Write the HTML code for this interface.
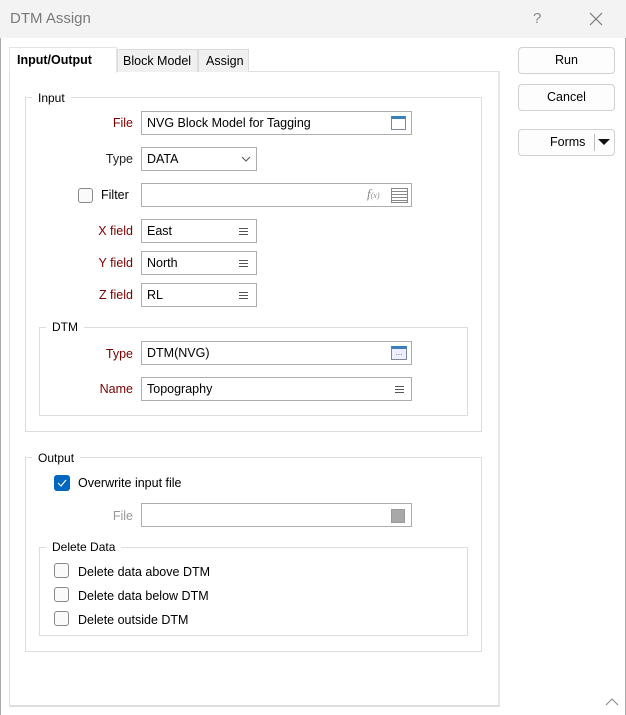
<!DOCTYPE html>
<html><head><meta charset="utf-8"><style>
*{box-sizing:border-box;margin:0;padding:0}
body{width:626px;height:715px;background:#fff;font-family:"Liberation Sans",sans-serif;font-size:12px;color:#000;position:relative;overflow:hidden}
.a{position:absolute}
.lbl{position:absolute;text-align:right;width:120px;color:#7a0000;line-height:16px;font-size:12.5px}
.box{position:absolute;border:1px solid #adadad;background:#fff;height:24px;padding:0 5px;line-height:23px;font-size:12.5px}
.grp{position:absolute;border:1px solid #dcdcdc}
.gt{position:absolute;background:#fff;padding:0 6px;line-height:14px;font-size:12px}
.btn{position:absolute;border:1px solid #d0d0d0;border-radius:4px;background:#fdfdfd;text-align:center;line-height:25px;font-size:12.5px}
.cb{position:absolute;width:15px;height:15px;border:1px solid #888;border-radius:3px;background:#fafafa}
.menu{position:absolute;width:9px;height:7px;border-top:1px solid #555;border-bottom:1px solid #555}
.menu:after{content:"";position:absolute;left:0;right:0;top:2px;height:1px;background:#555;box-shadow:0 -1px 0 #fff}
</style></head><body>
<div class="a" style="left:0;top:0;width:626px;height:38px;background:#f3f3f3"></div>
<div class="a" style="left:10px;top:10px;font-size:15px;color:#7a7a7a">DTM Assign</div>
<div class="a" style="left:533px;top:10px;font-size:15px;color:#888">?</div>
<svg class="a" style="left:589px;top:12px" width="14" height="14"><path d="M1 1L13 13M13 1L1 13" stroke="#777" stroke-width="1.2"/></svg>
<div class="a" style="left:0;top:38px;width:1px;height:677px;background:#aaa"></div>
<div class="a" style="left:625px;top:38px;width:1px;height:677px;background:#aaa"></div>

<div class="a" style="left:9px;top:71px;width:491px;height:636px;border:1px solid #e0e0e0;border-bottom:2px solid #ddd;border-right:2px solid #e8e8e8"></div>
<div class="a" style="left:9px;top:47px;width:108px;height:26px;background:#fff;border:1px solid #e4e4e4;border-bottom:none;font-weight:bold;font-size:12.5px;padding:5px 0 0 7px">Input/Output</div>
<div class="a" style="left:117px;top:49px;width:81px;height:23px;background:#f0f0f0;border:1px solid #dcdcdc;border-bottom:none;font-size:12.5px;padding:4px 0 0 5px">Block Model</div>
<div class="a" style="left:198px;top:49px;width:51px;height:23px;background:#f0f0f0;border:1px solid #dcdcdc;border-bottom:none;font-size:12.5px;padding:4px 0 0 7px">Assign</div>

<div class="grp" style="left:25px;top:97px;width:457px;height:335px"></div>
<div class="gt" style="left:32px;top:91px">Input</div>
<div class="lbl" style="left:13px;top:115px">File</div>
<div class="box" style="left:141px;top:111px;width:271px">NVG Block Model for Tagging</div>
<div class="a" style="left:391px;top:116px;width:15px;height:14px;border:1px solid #7a8a9a;border-top:3px solid #3a7fc0;background:#fff"></div>
<div class="lbl" style="left:13px;top:151px;color:#222">Type</div>
<div class="box" style="left:141px;top:147px;width:116px">DATA</div>
<svg class="a" style="left:241px;top:156px" width="10" height="6"><path d="M1 1L5 5L9 1" stroke="#555" fill="none"/></svg>
<div class="cb" style="left:78px;top:188px"></div>
<div class="a" style="left:101px;top:188px;font-size:12.5px">Filter</div>
<div class="box" style="left:141px;top:183px;width:271px"></div>
<div class="a" style="left:367px;top:186px;font-family:'Liberation Serif',serif;font-style:italic;color:#888;font-size:13px">f<span style="font-size:8px">(x)</span></div>
<div class="a" style="left:391px;top:188px;width:17px;height:15px;border:1px solid #888;background:repeating-linear-gradient(#fff 0 2px,#888 2px 3px)"></div>
<div class="lbl" style="left:13px;top:223px">X field</div>
<div class="box" style="left:141px;top:219px;width:116px">East</div>
<div class="menu" style="left:239px;top:228px"></div>
<div class="lbl" style="left:13px;top:255px">Y field</div>
<div class="box" style="left:141px;top:251px;width:116px">North</div>
<div class="menu" style="left:239px;top:260px"></div>
<div class="lbl" style="left:13px;top:287px">Z field</div>
<div class="box" style="left:141px;top:283px;width:116px">RL</div>
<div class="menu" style="left:239px;top:292px"></div>

<div class="grp" style="left:39px;top:327px;width:429px;height:89px"></div>
<div class="gt" style="left:46px;top:320px">DTM</div>
<div class="lbl" style="left:13px;top:346px">Type</div>
<div class="box" style="left:141px;top:341px;width:271px">DTM(NVG)</div>
<div class="a" style="left:391px;top:346px;width:16px;height:14px;border:1px solid #7a8a9a;border-top:3px solid #3a7fc0;background:#eef;font-size:8px;line-height:8px;text-align:center;color:#555">...</div>
<div class="lbl" style="left:13px;top:381px">Name</div>
<div class="box" style="left:141px;top:377px;width:271px">Topography</div>
<div class="menu" style="left:395px;top:386px"></div>

<div class="grp" style="left:25px;top:457px;width:457px;height:195px"></div>
<div class="gt" style="left:32px;top:451px">Output</div>
<div class="a" style="left:54px;top:475px;width:16px;height:16px;background:#0067c0;border-radius:3px"></div>
<svg class="a" style="left:57px;top:479px" width="10" height="8"><path d="M1 4L4 7L9 1" stroke="#fff" fill="none" stroke-width="1.2"/></svg>
<div class="a" style="left:78px;top:476px;font-size:12.5px">Overwrite input file</div>
<div class="lbl" style="left:13px;top:508px;color:#999">File</div>
<div class="box" style="left:141px;top:503px;width:271px"></div>
<div class="a" style="left:391px;top:509px;width:14px;height:14px;background:#a8a8a8;border:1px solid #999"></div>

<div class="grp" style="left:39px;top:547px;width:429px;height:89px"></div>
<div class="gt" style="left:46px;top:540px">Delete Data</div>
<div class="cb" style="left:54px;top:563px"></div>
<div class="a" style="left:78px;top:565px;font-size:12.5px">Delete data above DTM</div>
<div class="cb" style="left:54px;top:587px"></div>
<div class="a" style="left:78px;top:589px;font-size:12.5px">Delete data below DTM</div>
<div class="cb" style="left:54px;top:611px"></div>
<div class="a" style="left:78px;top:613px;font-size:12.5px">Delete outside DTM</div>

<div class="btn" style="left:518px;top:47px;width:97px;height:27px">Run</div>
<div class="btn" style="left:518px;top:84px;width:97px;height:27px">Cancel</div>
<div class="btn" style="left:518px;top:129px;width:97px;height:27px;text-align:left;padding-left:31px">Forms</div>
<div class="a" style="left:594px;top:134px;width:1px;height:17px;background:#bbb"></div>
<svg class="a" style="left:598px;top:139px" width="12" height="7"><path d="M0 0H12L6 6Z" fill="#111"/></svg>
<svg class="a" style="left:605px;top:697px" width="14" height="9"><path d="M1 8L7 2L13 8" stroke="#888" fill="none"/></svg>
</body></html>
